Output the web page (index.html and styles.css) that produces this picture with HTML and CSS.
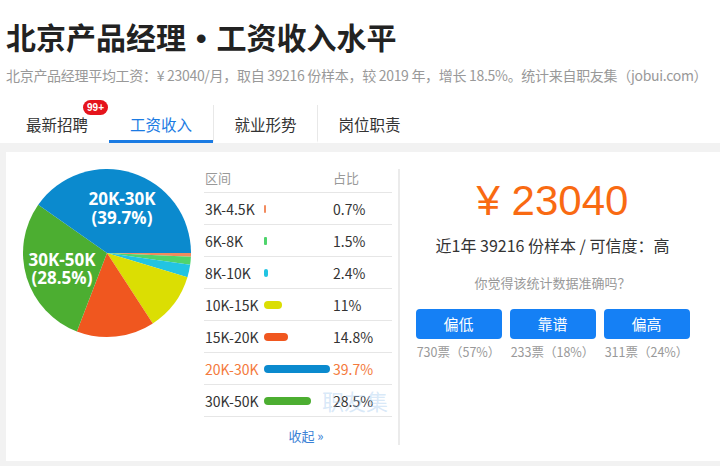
FILE: index.html
```html
<!DOCTYPE html>
<html lang="zh-CN">
<head>
<meta charset="utf-8">
<title>北京产品经理工资收入水平</title>
<link rel="stylesheet" href="styles.css">
</head>
<body>
<div class="header">
  <h1 class="title">北京产品经理<span class="dot">•</span>工资收入水平</h1>
  <p class="subtitle">北京产品经理平均工资：¥ 23040/月，取自 39216 份样本，较 2019 年，增长 18.5%。统计来自职友集（jobui.com）</p>
  <div class="tabs">
    <div class="tab">最新招聘<span class="badge">99+</span></div>
    <div class="tab active">工资收入</div>
    <div class="tab sep">就业形势</div>
    <div class="tab sep">岗位职责</div>
  </div>
</div>
<div class="panel">
  <div class="card">
    <div class="pie">
      <svg width="170" height="170" viewBox="0 0 170 170">
        <path d="M85,85 L169,85 A84,84 0 0,1 168.92,88.75 Z" fill="#f28b5e"/>
        <path d="M85,85 L168.92,88.75 A84,84 0 0,1 168.18,96.74 Z" fill="#4fd46c"/>
        <path d="M85,85 L168.18,96.74 A84,84 0 0,1 165.42,109.27 Z" fill="#22c4e2"/>
        <path d="M85,85 L165.42,109.27 A84,84 0 0,1 130.80,155.42 Z" fill="#dbde03"/>
        <path d="M85,85 L130.80,155.42 A84,84 0 0,1 54.90,163.42 Z" fill="#f0571f"/>
        <path d="M85,85 L54.90,163.42 A84,84 0 0,1 16.24,36.75 Z" fill="#4cae31"/>
        <path d="M85,85 L16.24,36.75 A84,84 0 0,1 169,85 Z" fill="#0b8ace"/>
        <text class="pie-label" x="100" y="37">20K-30K</text>
        <text class="pie-label" x="100" y="56">(39.7%)</text>
        <text class="pie-label" x="40" y="98">30K-50K</text>
        <text class="pie-label" x="40" y="116">(28.5%)</text>
      </svg>
    </div>
    <div class="table">
      <div class="row head"><span>区间</span><span></span><span>占比</span></div>
      <div class="row"><span>3K-4.5K</span><span class="bar c1" style="width:2px"></span><span>0.7%</span></div>
      <div class="row"><span>6K-8K</span><span class="bar c2" style="width:3px"></span><span>1.5%</span></div>
      <div class="row"><span>8K-10K</span><span class="bar c3" style="width:4px"></span><span>2.4%</span></div>
      <div class="row"><span>10K-15K</span><span class="bar c4" style="width:18px"></span><span>11%</span></div>
      <div class="row"><span>15K-20K</span><span class="bar c5" style="width:24px"></span><span>14.8%</span></div>
      <div class="row hl"><span>20K-30K</span><span class="bar c6" style="width:66px"></span><span>39.7%</span></div>
      <div class="row"><span>30K-50K</span><span class="bar c7" style="width:47px"></span><span>28.5%</span></div>
      <div class="more">收起 »</div>
      <div class="watermark">职友集</div>
    </div>
    <div class="divider"></div>
    <div class="summary">
      <div class="salary">¥ 23040</div>
      <div class="sample">近1年 39216 份样本 / 可信度：高</div>
      <div class="ask">你觉得该统计数据准确吗？</div>
      <div class="votes">
        <div class="vote"><div class="btn">偏低</div><div class="count">730票（57%）</div></div>
        <div class="vote"><div class="btn">靠谱</div><div class="count">233票（18%）</div></div>
        <div class="vote"><div class="btn">偏高</div><div class="count">311票（24%）</div></div>
      </div>
    </div>
  </div>
</div>
</body>
</html>
```
FILE: styles.css
```css
html, body {
  margin: 0;
  padding: 0;
}
body {
  width: 720px;
  height: 466px;
  overflow: hidden;
  background: #fff;
  color: #333;
  font-family: "Noto Sans CJK SC", "Liberation Sans", sans-serif;
}
.header {
  padding: 0 6px;
}
.title {
  margin: 0;
  padding-top: 18px;
  height: 36px;
  font-size: 30px;
  line-height: 36px;
  font-weight: 700;
  color: #222;
  white-space: nowrap;
}
.dot {
  padding: 0 10px;
  line-height: 0;
  font-family: "Liberation Sans", sans-serif;
}
.subtitle {
  margin: 11px 0 0;
  font-size: 14px;
  line-height: 20px;
  letter-spacing: -0.3px;
  color: #999;
  white-space: nowrap;
}
.tabs {
  display: flex;
  margin: 20px 0 0 -1px;
}
.tab {
  position: relative;
  box-sizing: border-box;
  width: 104px;
  height: 38px;
  padding-top: 3px;
  line-height: 32px;
  font-size: 15.5px;
  text-align: center;
  color: #333;
  border-bottom: 3px solid transparent;
}
.tab.active {
  color: #1b7be3;
  border-bottom-color: #1b7be3;
}
.tab.sep {
  border-left: 1px solid #e8e8e8;
}
.badge {
  position: absolute;
  top: -5px;
  right: 1px;
  height: 15px;
  padding: 0 4px;
  border-radius: 8px;
  background: #e5141c;
  color: #fff;
  font-family: "Liberation Sans", sans-serif;
  font-weight: 700;
  font-size: 10px;
  line-height: 15px;
}
.panel {
  background: #f2f2f2;
  padding: 9px 0 5px 6px;
}
.card {
  display: flex;
  align-items: flex-start;
  height: 309px;
  background: #fff;
}
.pie {
  width: 170px;
  height: 170px;
  margin: 16px 0 0 16px;
}
.pie svg {
  display: block;
}
.pie-label {
  fill: #fff;
  font-family: "Open Sans", "DejaVu Sans", sans-serif;
  font-weight: 700;
  font-size: 17px;
  text-anchor: middle;
}
.table {
  position: relative;
  width: 188px;
  margin: 12px 0 0 12px;
}
.row {
  display: grid;
  grid-template-columns: 59px 69px 1fr;
  align-items: center;
  height: 31px;
  padding-left: 1px;
  border-bottom: 1px solid #e6e6e6;
  font-size: 14px;
  line-height: 20px;
  color: #333;
}
.row.head {
  height: 28px;
  font-size: 13px;
  color: #999;
}
.row.hl {
  color: #f47a3c;
}
.bar {
  display: block;
  height: 8px;
  border-radius: 4px;
}
.c1 { background: #f28b5e; border-radius: 1px; }
.c2 { background: #4fd46c; border-radius: 1px; }
.c3 { background: #22c4e2; border-radius: 2px; }
.c4 { background: #dbde03; }
.c5 { background: #f0571f; }
.c6 { background: #0b8ace; }
.c7 { background: #4cae31; }
.more {
  height: 38px;
  line-height: 38px;
  padding-left: 16px;
  text-align: center;
  font-size: 13px;
  color: #3b82d6;
}
.watermark {
  position: absolute;
  left: 118px;
  top: 223px;
  font-size: 22px;
  line-height: 26px;
  color: rgba(170, 205, 240, 0.45);
}
.divider {
  width: 2px;
  height: 276px;
  margin: 17px 0 0 6px;
  background: #ebebeb;
}
.summary {
  width: 305px;
  padding-top: 25px;
  text-align: center;
}
.salary {
  font-family: "Liberation Sans", sans-serif;
  font-size: 42px;
  line-height: 48px;
  color: #f96a12;
}
.sample {
  margin-top: 8px;
  font-size: 16px;
  line-height: 24px;
  color: #333;
}
.ask {
  margin-top: 16px;
  font-size: 13px;
  line-height: 20px;
  color: #999;
}
.votes {
  display: flex;
  justify-content: center;
  gap: 8px;
  margin-top: 16px;
}
.vote {
  width: 86px;
}
.btn {
  height: 30px;
  line-height: 30px;
  border-radius: 4px;
  background: #1580f5;
  color: #fff;
  font-size: 15px;
}
.count {
  margin-top: 4px;
  font-size: 12.5px;
  line-height: 18px;
  color: #999;
  white-space: nowrap;
}
```
